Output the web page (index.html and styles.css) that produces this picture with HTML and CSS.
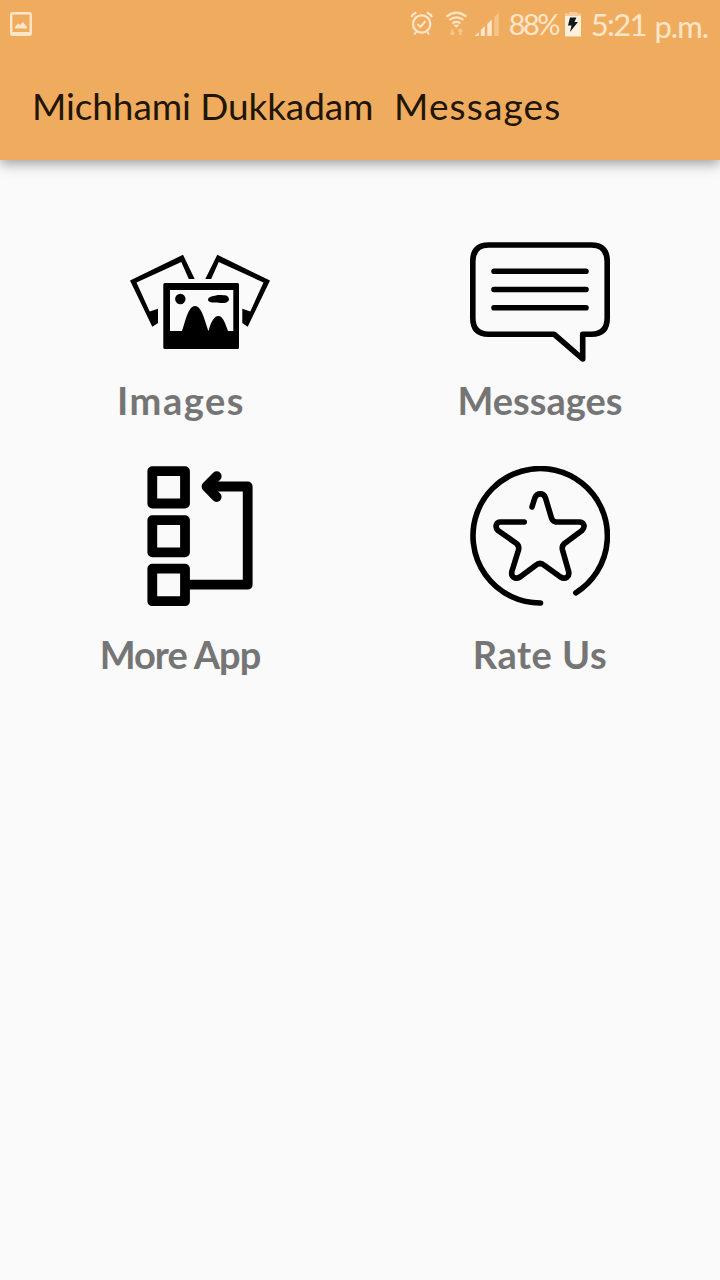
FILE: index.html
```html
<!DOCTYPE html>
<html lang="en">
<head>
<meta charset="utf-8">
<title>Michhami Dukkadam Messages</title>
<link rel="stylesheet" href="styles.css">
</head>
<body>
<header class="header">
  <div class="status">
    <svg class="status-photo" width="24" height="26" viewBox="9 11 24 26"><rect x="11.2" y="13.2" width="19.6" height="21.6" rx="1.5" fill="none" stroke="#fce6ca" stroke-width="2.4"/><path d="M11 32h20v3H11zM15 28.500v-1.500l3-3.500 2 1.500 3-3 4 5v1.500z" fill="#fce6ca"/></svg>
    <svg class="status-signals" width="92" height="32" viewBox="409 8 92 32" fill="none" stroke="#fce6ca">
      <circle cx="421.700" cy="24" r="8.700" stroke-width="2.200"/>
      <path d="M417.500 24l3 3 5-6M416 32l-1.500 2.500M427.500 32l1.500 2.500" stroke-width="2"/>
      <path d="M411.300 17q1.500-3 5-4.500M432 17q-1.500-3-5-4.500" stroke-width="2"/>
      <path d="M446.500 16.500q10-8 20 0M449.500 20q7-5.500 14 0M452.500 23.300q4-3 8 0" stroke-width="2.200"/>
      <path d="M453.500 24.800h6l-3 3z" fill="#fce6ca" stroke="none"/>
      <path d="M452.500 29v6M450.500 33.500h4M460.500 29v6M458.500 30.500h4" stroke="#f6c994" stroke-width="2"/>
      <g fill="#fce6ca" stroke="none"><path d="M475 36l4-4v4zM481 30l4-4v10h-4zM487.500 24l4.500-4.500V36h-4.500z"/><path d="M494.500 17l4.500-4.500V36h-4.500z" fill="#f5c48c"/></g>
    </svg>
    <span class="battery-level">88%</span>
    <svg class="status-battery" width="16" height="25" viewBox="0 0 16 25"><path d="M0 1.500h4V0h8v1.500h4v3H0z" fill="#f6cb98"/><path d="M0 4h16v20.500H0z" fill="#fff0dc"/><path d="M5 5.500h6.500L9.500 10H13L5 20l1.500-6.500H3z" fill="#111820"/></svg>
    <span class="clock">5:21</span><span class="meridiem">p.m.</span>
  </div>
  <h1 class="title"><span class="title-name">Michhami Dukkadam</span><span class="title-kind">Messages</span></h1>
</header>
<main class="menu">
  <a class="tile tile-start">
    <svg class="icon" viewBox="130 231 140 140">
      <path d="M130 280.500L183 254.700 194.700 279H188.800L181.300 262 136.500 282.500 149.700 311.500 158 308.800V323L152.300 326.700ZM270 280.500L217.300 254.700 205.300 279H211.200L218.700 262 263.500 282.500 250.300 311.500 242.300 308.800V323L247.700 326.700Z"/>
      <path fill-rule="evenodd" d="M165 283H237.500Q239 283 239 284.500V347.500Q239 349 237.500 349H165Q163.300 349 163.300 347.500V284.500Q163.300 283 165 283ZM170 290V331H182C185 323 188 306 195 306S205 322 208.500 331C211 322 214 316 218.500 316S225 323 228 331H233.300V290Z"/>
      <circle cx="180.300" cy="299" r="5.200"/>
      <path d="M208 299.500C208 297 213 296 216 295.500 219 294.500 222 295.500 224 295.200 227 295 229 297 229 299S227 303 223 303C220 303.500 217 302 215 302.500 211 302.500 208 302 208 299.500Z"/>
    </svg>
    <span class="label label-images">Images</span>
  </a>
  <a class="tile">
    <svg class="icon line" viewBox="470 231 140 140">
      <path d="M554 334.200H488.500Q472.800 334.200 472.800 318V261.500Q472.800 245 488.500 245H591.500Q607.200 245 607.200 261.500V318Q607.200 334.200 591.500 334.200H582.700V359L554 334.200ZM494 271.300H586M494 289.500H586M494 307.800H586"/>
    </svg>
    <span class="label label-messages">Messages</span>
  </a>
  <a class="tile tile-start tile-lower">
    <svg class="icon blocks" viewBox="130 466 140 140">
      <path d="M152.300 471.200H185V503.500H152.300ZM152.300 520.200H185V552.300H152.300ZM152.300 568.700H185V601.200H152.300ZM185 584.700H247.700V486.500H207"/>
      <path d="M216.700 476.200L206.500 486.500 216.700 497"/>
    </svg>
    <span class="label label-more">More App</span>
  </a>
  <a class="tile tile-lower">
    <svg class="icon line" viewBox="470 466 140 140">
      <path d="M540.500 603A67.200 67.200 0 1 1 575.800 592.800"/>
      <path d="M524.200 522H500.500C496 522 494.500 527 498 530.500L516.500 543.500Q519.500 546 518.500 550L512 571C510.500 576.500 515 580 520 577L535.500 565.500Q540 561.500 544.500 565.500L560.500 577C565.500 580 570 576.500 568.500 571L562.500 550Q561.500 546 564.500 543.500L582 530.500C585.500 527 584.500 522 579 522H556Q552.500 521.500 551.500 518L545.500 498C543.500 492.500 537 492.500 534.800 498L532 507"/>
    </svg>
    <span class="label label-rate">Rate Us</span>
  </a>
</main>
</body>
</html>
```
FILE: styles.css
```css
* {
  box-sizing: border-box;
}

body {
  margin: 0;
  min-height: 1280px;
  background: #fafafa;
  font-family: Lato, "Open Sans", sans-serif;
}

.header {
  height: 160px;
  background: #f0ac5e;
  box-shadow: 0 4px 12px rgba(0, 0, 0, 0.36);
}

.status {
  display: flex;
  align-items: center;
  height: 48px;
  padding: 0 12px 0 9px;
  color: #fce6ca;
  font-size: 31px;
  line-height: 48px;
  white-space: nowrap;
}

.status-signals {
  margin-left: 376px;
}

.battery-level {
  width: 56px;
  padding-left: 8px;
  font-size: 29px;
  letter-spacing: -2.6px;
}

.status-battery {
  margin-left: 8px;
}

.clock {
  width: 64px;
  margin-left: 10px;
  letter-spacing: -1.6px;
}

.meridiem {
  padding-top: 3px;
  letter-spacing: -1px;
}

.title {
  display: flex;
  margin: 0;
  padding: 2px 0 0 32px;
  color: #1f1509;
  font-size: 37px;
  font-weight: 400;
  line-height: 112px;
  white-space: nowrap;
}

.title-name {
  width: 362px;
  letter-spacing: -0.1px;
}

.title-kind {
  letter-spacing: 1.15px;
}

.menu {
  display: grid;
  grid-template-columns: 1fr 1fr;
  row-gap: 42px;
  padding-top: 71px;
}

.tile {
  display: flex;
  flex-direction: column;
  align-items: center;
}

.icon {
  width: 140px;
  height: 140px;
}

.tile-start .icon {
  margin-left: 40px;
}

.line,
.blocks {
  fill: none;
  stroke: #000;
  stroke-width: 5.6;
  stroke-linecap: round;
  stroke-linejoin: round;
}

.blocks {
  stroke-width: 9.8;
}

.label {
  margin-top: 6px;
  margin-bottom: 1px;
  color: #757575;
  font-size: 38px;
  font-weight: 700;
  line-height: 46px;
  white-space: nowrap;
}

.tile-lower .label {
  margin-top: 25px;
}

.label-images {
  padding-left: 2px;
  letter-spacing: 1.5px;
}

.label-more {
  letter-spacing: -1px;
}

.label-rate {
  letter-spacing: 0.5px;
}
```
